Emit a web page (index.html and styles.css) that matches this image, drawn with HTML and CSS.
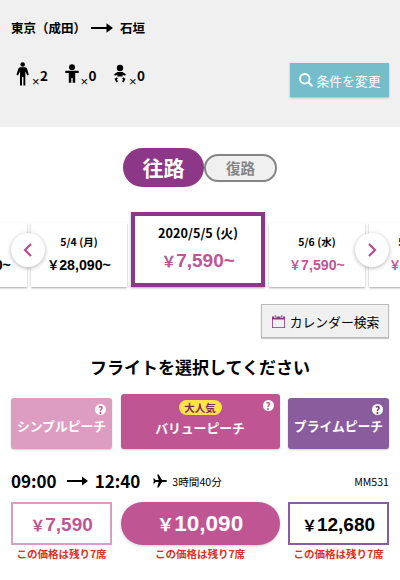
FILE: index.html
```html
<!DOCTYPE html>
<html lang="ja">
<head>
  <meta charset="UTF-8">
  <meta name="viewport" content="width=device-width, initial-scale=1.0">
  <title>フライト選択</title>
  <link rel="stylesheet" href="styles.css">
</head>
<body>
  <header class="search-summary">
    <div class="route">
      <span>東京（成田）</span>
      <svg class="arrow" width="22" height="10" viewBox="0 0 22 10"><path d="M0 4H15.500V.3L22 5l-6.500 4.700V6H0z"/></svg>
      <span>石垣</span>
    </div>
    <div class="conditions">
      <div class="passengers">
        <div class="passenger">
          <svg width="14" height="24" viewBox="0 0 14 24"><circle cx="6.700" cy="2.500" r="2.300"/><path d="M4.400 5.200h4.600q1.800 0 2.200 1.800l1.600 5.800-1.500.7-2-4v14H7.400V15H6v8.500H4V9.500l-2 4-1.500-.7L2.200 7q.4-1.800 2.200-1.800z"/></svg>
          <span class="times">×</span><span class="count">2</span>
        </div>
        <div class="passenger">
          <svg width="14" height="24" viewBox="0 0 14 24"><circle cx="7" cy="5.200" r="3"/><path d="M.3 8.800h13.400v2.200H10.200v9.700H7.700V16H6.300v4.700H3.800V11H.3z"/></svg>
          <span class="times">×</span><span class="count">0</span>
        </div>
        <div class="passenger">
          <svg width="14" height="24" viewBox="0 0 14 24"><circle cx="7" cy="6" r="3.200"/><path d="M4.500 10h5l3.500 2.300-1 1.500-2.400-1.100v1.800H4.400v-1.800L2 13.800l-1-1.500z"/><path d="M4.300 15.800l-1.600 1.500 1.500 2.700M9.700 15.800l1.600 1.500L9.800 20" fill="none" stroke="#000" stroke-width="1.800"/></svg>
          <span class="times">×</span><span class="count">0</span>
        </div>
      </div>
      <button class="change-btn">
        <svg width="14" height="14" viewBox="0 0 14 14" fill="none" stroke="#fff" stroke-width="1.900"><circle cx="5.800" cy="5.800" r="4.800"/><path d="M9.200 9.200l4.200 4"/></svg>
        条件を変更
      </button>
    </div>
  </header>

  <main>
    <div class="tabs">
      <div class="tab active">往路</div>
      <div class="tab">復路</div>
    </div>

    <div class="dates">
      <div class="date-list">
        <div class="date-card">
          <div class="date">5/3 (日)</div>
          <div class="date-price"><span class="yen">￥</span>28,090~</div>
        </div>
        <div class="date-card">
          <div class="date">5/4 (月)</div>
          <div class="date-price"><span class="yen">￥</span>28,090~</div>
        </div>
        <div class="date-card selected">
          <div class="date">2020/5/5 (火)</div>
          <div class="date-price low"><span class="yen">￥</span>7,590~</div>
        </div>
        <div class="date-card">
          <div class="date">5/6 (水)</div>
          <div class="date-price low"><span class="yen">￥</span>7,590~</div>
        </div>
        <div class="date-card">
          <div class="date">5/7 (木)</div>
          <div class="date-price low"><span class="yen">￥</span>7,590~</div>
        </div>
      </div>
      <button class="nav prev"><svg width="10" height="14" viewBox="0 0 10 14"><path d="M8 1L2 7l6 6"/></svg></button>
      <button class="nav next"><svg width="10" height="14" viewBox="0 0 10 14"><path d="M2 1l6 6-6 6"/></svg></button>
    </div>

    <button class="calendar-btn">
      <svg width="13" height="13" viewBox="0 0 13 13"><path d="M0 1.500h13V13H0zM.8 4.500v7.700h11.400V4.500z" fill="#8c3787" fill-rule="evenodd"/><path d="M3.200 0v3M9.800 0v3" stroke="#f0f0f0" stroke-width="2.400"/><path d="M3.200 0v2.700M9.800 0v2.700" stroke="#8c3787"/></svg>
      カレンダー検索
    </button>

    <h1>フライトを選択してください</h1>

    <div class="fares">
      <div class="fare simple"><span class="help">?</span>シンプルピーチ</div>
      <div class="fare value"><span class="help">?</span><span class="popular">大人気</span>バリューピーチ</div>
      <div class="fare prime"><span class="help">?</span>プライムピーチ</div>
    </div>

    <div class="flight">
      <span class="time">09:00</span>
      <svg class="arrow" width="21" height="10" viewBox="0 0 21 10"><path d="M0 4H15V.5L21 5l-6 4.500V6H0z"/></svg>
      <span class="time">12:40</span>
      <svg class="plane" width="14" height="14" viewBox="0 0 14 14"><path d="M14 7q0 .9-1.500.9H9L5.600 13.500H4.200L5.700 7.900H2.600L1.300 9.600H.2L.9 7 .2 4.400h1.100l1.300 1.700h3.100L4.200.5h1.400L9 6.100h3.500Q14 6.100 14 7z"/></svg>
      <span class="duration">3時間40分</span>
      <span class="flight-no">MM531</span>
    </div>

    <div class="prices">
      <div>
        <div class="price simple"><span class="yen">￥</span>7,590</div>
        <div class="remain">この価格は残り7席</div>
      </div>
      <div>
        <div class="price value"><span class="yen">￥</span>10,090</div>
        <div class="remain">この価格は残り7席</div>
      </div>
      <div>
        <div class="price prime"><span class="yen">￥</span>12,680</div>
        <div class="remain">この価格は残り7席</div>
      </div>
    </div>
  </main>
</body>
</html>
```
FILE: styles.css
```css
* {
  box-sizing: border-box;
}
body {
  margin: 0;
  font-family: "Noto Sans CJK JP", sans-serif;
  color: #000;
  background-color: #fff;
}
button {
  padding: 0;
  font-family: inherit;
  cursor: pointer;
}
svg {
  flex-shrink: 0;
}
.search-summary {
  height: 127px;
  padding: 18px 11px 0;
  background-color: #f0f0f0;
}
.route {
  display: flex;
  align-items: center;
  height: 20px;
  font-size: 12.5px;
  font-weight: 700;
  line-height: 20px;
}
.route .arrow {
  margin: 0 7px 0 5px;
}
.conditions {
  display: flex;
  justify-content: space-between;
  margin-top: 24px;
}
.passengers {
  display: flex;
  gap: 16px;
  padding-left: 5px;
}
.passenger {
  display: flex;
  width: 32.5px;
}
.times {
  flex: none;
  width: 7px;
  height: 12px;
  margin: 14px 0 0 2px;
  font-family: "Liberation Sans", Arial, sans-serif;
  font-size: 13px;
  line-height: 12px;
  text-align: center;
}
.count {
  margin-left: 1px;
  font-size: 13.5px;
  font-weight: 700;
  line-height: 27px;
}
.change-btn {
  display: flex;
  align-items: center;
  justify-content: center;
  gap: 4px;
  width: 99px;
  height: 34px;
  margin-top: 1px;
  border: none;
  background-color: #76bdcb;
  box-shadow: 0 1px 2px rgba(0, 0, 0, 0.25);
  color: #fff;
  font-size: 12.8px;
}
.tabs {
  display: flex;
  align-items: center;
  justify-content: center;
  height: 39px;
  margin-top: 21px;
}
.tab {
  width: 73px;
  height: 28px;
  border: 2px solid #858585;
  border-radius: 14px;
  background-color: #f0f0f0;
  color: #858585;
  font-size: 14.5px;
  font-weight: 700;
  line-height: 24px;
  text-align: center;
}
.tab.active {
  width: 81px;
  height: 39px;
  border: none;
  border-radius: 20px;
  background-color: #8c3787;
  color: #fff;
  font-size: 21px;
  font-weight: 700;
  line-height: 38px;
}
.dates {
  position: relative;
  margin-top: 25px;
}
.date-list {
  display: flex;
  align-items: flex-end;
  gap: 4px;
  height: 78px;
  margin-bottom: -3px;
  padding-bottom: 3px;
  padding-left: 0;
  overflow: hidden;
}
.date-card {
  flex: none;
  width: 96px;
  height: 64px;
  padding-top: 10px;
  box-shadow: 0 1px 2px rgba(0, 0, 0, 0.35);
  text-align: center;
}
.date-card:first-child {
  margin-left: -69px;
}
.date {
  font-size: 10.5px;
  font-weight: 700;
  line-height: 18px;
}
.date-price {
  font-family: "Liberation Sans", Arial, sans-serif;
  font-size: 14.2px;
  font-weight: 700;
  line-height: 28px;
}
.low {
  color: #c05594;
}
.yen {
  font-family: "Noto Sans CJK JP", sans-serif;
  line-height: 1;
}
.date-price .yen {
  font-size: 12px;
}
.date-card.selected {
  width: 134px;
  height: 75px;
  padding-top: 7px;
  border: 4px solid #8c3787;
}
.selected .date {
  font-size: 12.7px;
  line-height: 20px;
}
.selected .date-price {
  font-size: 19px;
  line-height: 36px;
}
.selected .yen {
  font-size: 15px;
}
.nav {
  position: absolute;
  top: 21px;
  display: flex;
  align-items: center;
  justify-content: center;
  width: 34px;
  height: 34px;
  border: none;
  border-radius: 50%;
  background-color: #fff;
  box-shadow: 0 1px 4px rgba(0, 0, 0, 0.3);
}
.nav path {
  fill: none;
  stroke: #b84b91;
  stroke-width: 2.2;
}
.prev {
  left: 11px;
}
.next {
  right: 11px;
}
.calendar-btn {
  display: flex;
  align-items: center;
  justify-content: center;
  gap: 5px;
  width: 128px;
  height: 34px;
  margin: 17px 11px 0 auto;
  padding-left: 1px;
  border: 1px solid #bbb;
  background-color: #f0f0f0;
  box-shadow: 0 1px 1px rgba(0, 0, 0, 0.2);
  color: #000;
  font-size: 12.8px;
}
h1 {
  margin: 16px 0 0;
  font-size: 17px;
  line-height: 26px;
  text-align: center;
}
.fares,
.prices {
  display: grid;
  grid-template-columns: 101px 159px 101px;
  justify-content: space-between;
  padding: 0 11px;
}
.fares {
  align-items: end;
  margin-top: 14px;
}
.fare {
  position: relative;
  display: flex;
  flex-direction: column;
  align-items: center;
  height: 51px;
  padding-top: 18px;
  border-radius: 3px;
  box-shadow: 0 1px 2px rgba(0, 0, 0, 0.2);
  color: #fff;
  font-size: 12.8px;
  font-weight: 700;
  line-height: 20px;
}
.fare.simple {
  background-color: #dc9dc0;
}
.fare.value {
  height: 55px;
  padding-top: 6px;
  background-color: #c05594;
}
.fare.prime {
  background-color: #895c9e;
}
.help {
  position: absolute;
  top: 6px;
  right: 6px;
  width: 11px;
  height: 11px;
  border-radius: 50%;
  background-color: #fff;
  color: #c05594;
  font-size: 10px;
  line-height: 11px;
  text-align: center;
}
.prime .help {
  color: #5e3674;
}
.popular {
  width: 43px;
  height: 15px;
  margin-bottom: 3px;
  border-radius: 8px;
  background-color: #ffe34d;
  color: #7c2b55;
  font-size: 10.5px;
  line-height: 15px;
  text-align: center;
}
.flight {
  display: flex;
  align-items: center;
  height: 24px;
  margin: 20px 11px 0;
}
.time {
  font-size: 17px;
  font-weight: 700;
  line-height: 24px;
}
.flight .arrow {
  margin: 0 7px 0 10px;
}
.plane {
  margin: 0 5px 0 13px;
}
.duration,
.flight-no {
  font-size: 10.6px;
}
.flight-no {
  margin-left: auto;
}
.prices {
  margin-top: 9px;
}
.price {
  height: 43px;
  font-family: "Liberation Sans", Arial, sans-serif;
  font-size: 19px;
  font-weight: 700;
  line-height: 43px;
  text-align: center;
}
.price .yen {
  font-size: 15px;
}
.price.simple {
  border: 2px solid #dc9dc0;
  color: #c05594;
  line-height: 41px;
}
.price.value {
  border-radius: 22px;
  background-color: #c05594;
  box-shadow: 0 1px 3px rgba(0, 0, 0, 0.2);
  color: #fff;
  font-size: 22.5px;
}
.price.value .yen {
  font-size: 17.5px;
}
.price.prime {
  border: 2px solid #895c9e;
  line-height: 41px;
}
.remain {
  color: #dc3127;
  font-size: 10.5px;
  font-weight: 700;
  line-height: 18px;
  text-align: center;
}
```
